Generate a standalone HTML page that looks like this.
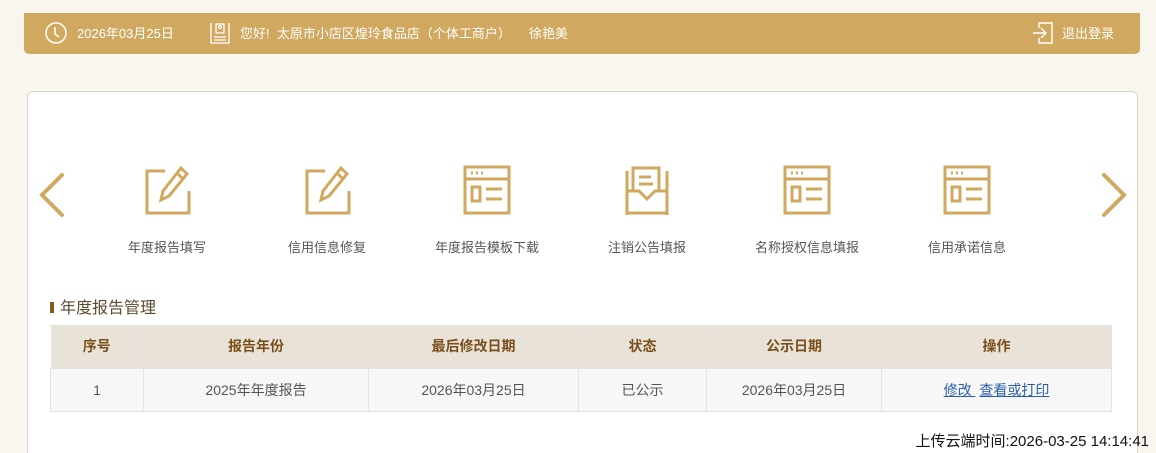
<!DOCTYPE html>
<html><head><meta charset="utf-8"><style>
*{margin:0;padding:0;box-sizing:border-box}
html,body{width:1156px;height:453px;overflow:hidden}
body{background:#f9f6ef;font-family:"Liberation Sans","Noto Sans CJK SC",sans-serif;position:relative}
.bar{position:absolute;left:24px;top:13px;width:1116px;height:41px;background:#d1a85f;border-radius:0 0 5px 5px;color:#fff;font-size:13px}
.bar span{position:absolute;top:13px;line-height:16px}
.card{position:absolute;left:27px;top:91px;width:1111px;height:370px;background:#fff;border:1px solid #d8d4ce;border-radius:6px}
.it{position:absolute;top:165px;width:160px;text-align:center;font-size:13px;color:#555}
.it svg{display:block;margin:0 auto 22px}
.title{position:absolute;left:50px;top:294px;font-size:16px;color:#5c4a2e}
.title i{display:inline-block;width:4px;height:11px;background:#8a5a1c;margin-right:6px;vertical-align:0}
table{position:absolute;left:50px;top:325px;width:1062px;border-collapse:collapse;font-size:14px;text-align:center}
th{background:#e9e2d9;color:#7a4f1a;height:43px;font-weight:bold;border-right:1px solid #ece6de}
td{background:#f7f7f7;color:#555;height:43px;border:1px solid #e2e2e2}
a{color:#2a5db0;text-decoration:underline}
.ft{position:absolute;right:7px;top:430px;font-size:15px;color:#111}
</style></head><body>
<div class="bar">
<svg style="position:absolute;left:20px;top:8px" width="24" height="24" viewBox="0 0 24 24" fill="none" stroke="#fff" stroke-width="1.5"><circle cx="12" cy="12" r="10"/><path d="M11 6v7l4 3"/></svg>
<span style="left:53px">2026年03月25日</span>
<svg style="position:absolute;left:186px;top:9px" width="20" height="22" viewBox="0 0 20 22" fill="none" stroke="#fff" stroke-width="1.3"><path d="M1 1v20h18V1"/><rect x="6" y="2" width="8" height="9"/><circle cx="10" cy="5" r="1.5"/><path d="M4 15h12M4 18h12"/></svg>
<span style="left:216px">您好!&nbsp; 太原市小店区煌玲食品店（个体工商户）&nbsp;&nbsp;&nbsp;&nbsp; 徐艳美</span>
<svg style="position:absolute;left:1008px;top:9px" width="22" height="22" viewBox="0 0 22 22" fill="none" stroke="#fff" stroke-width="1.4"><path d="M7 6V1h13v20H7v-5"/><path d="M1 11h12M9 6l5 5-5 5"/></svg>
<span style="left:1038px">退出登录</span>
</div>
<div class="card"></div>
<svg style="position:absolute;left:38px;top:172px" width="28" height="46" viewBox="0 0 28 46" fill="none" stroke="#d0a95e" stroke-width="4" stroke-linecap="round"><path d="M24 3L4 23l20 20"/></svg>
<svg style="position:absolute;left:1100px;top:172px" width="28" height="46" viewBox="0 0 28 46" fill="none" stroke="#d0a95e" stroke-width="4" stroke-linecap="round"><path d="M4 3l20 20L4 43"/></svg>
<div class="it" style="left:87px"><svg width="48" height="50" viewBox="0 0 48 50" fill="none" stroke="#d0a95e" stroke-width="3"><path d="M22 6H4v42h42V26"/><path d="M38 3l6 6-18 22-8 4 2-9z"/><path d="M34 8l6 6"/></svg>年度报告填写</div>
<div class="it" style="left:247px"><svg width="48" height="50" viewBox="0 0 48 50" fill="none" stroke="#d0a95e" stroke-width="3"><path d="M22 6H4v42h42V26"/><path d="M38 3l6 6-18 22-8 4 2-9z"/><path d="M34 8l6 6"/></svg>信用信息修复</div>
<div class="it" style="left:407px"><svg width="48" height="50" viewBox="0 0 48 50" fill="none" stroke="#d0a95e" stroke-width="3"><rect x="2" y="2" width="44" height="46"/><path d="M2 14h44"/><path d="M8 8h2M13 8h2M18 8h2"/><rect x="9" y="22" width="8" height="14"/><path d="M23 24h16M23 34h16"/></svg>年度报告模板下载</div>
<div class="it" style="left:567px"><svg width="48" height="50" viewBox="0 0 48 50" fill="none" stroke="#d0a95e" stroke-width="3"><path d="M4 6v44M44 6v44M4 48h40"/><path d="M4 26h12l8 8 8-8h12"/><path d="M10 26V3h26v23"/><path d="M16 12h12M16 19h14"/></svg>注销公告填报</div>
<div class="it" style="left:727px"><svg width="48" height="50" viewBox="0 0 48 50" fill="none" stroke="#d0a95e" stroke-width="3"><rect x="2" y="2" width="44" height="46"/><path d="M2 14h44"/><path d="M8 8h2M13 8h2M18 8h2"/><rect x="9" y="22" width="8" height="14"/><path d="M23 24h16M23 34h16"/></svg>名称授权信息填报</div>
<div class="it" style="left:887px"><svg width="48" height="50" viewBox="0 0 48 50" fill="none" stroke="#d0a95e" stroke-width="3"><rect x="2" y="2" width="44" height="46"/><path d="M2 14h44"/><path d="M8 8h2M13 8h2M18 8h2"/><rect x="9" y="22" width="8" height="14"/><path d="M23 24h16M23 34h16"/></svg>信用承诺信息</div>
<div class="title"><i></i>年度报告管理</div>
<table>
<tr><th style="width:93px">序号</th><th style="width:225px">报告年份</th><th style="width:210px">最后修改日期</th><th style="width:128px">状态</th><th style="width:175px">公示日期</th><th>操作</th></tr>
<tr><td>1</td><td>2025年年度报告</td><td>2026年03月25日</td><td>已公示</td><td>2026年03月25日</td><td><a>修改 </a>&nbsp;<a>查看或打印</a></td></tr>
</table>
<div class="ft">上传云端时间:2026-03-25 14:14:41</div>
</body></html>
